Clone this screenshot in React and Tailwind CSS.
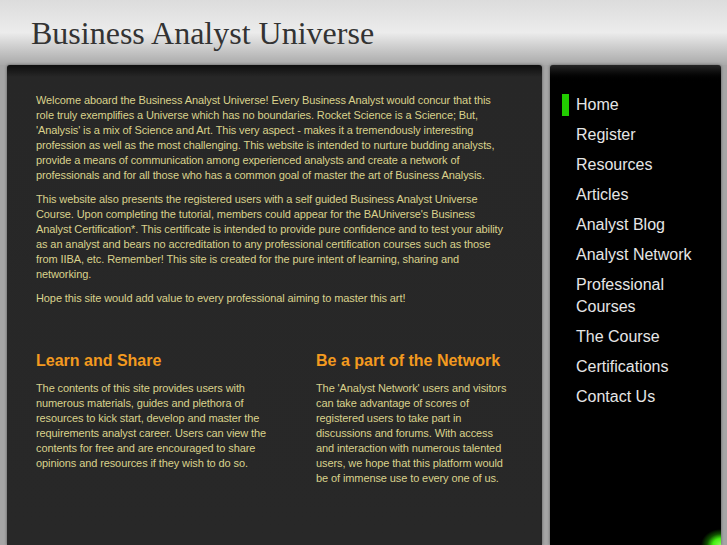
import React from 'react';

const menu = [
  'Home',
  'Register',
  'Resources',
  'Articles',
  'Analyst Blog',
  'Analyst Network',
  'Professional Courses',
  'The Course',
  'Certifications',
  'Contact Us',
];

// lines are broken where the original page breaks them
const intro = [
  [
    'Welcome aboard the Business Analyst Universe! Every Business Analyst would concur that this',
    'role truly exemplifies a Universe which has no boundaries. Rocket Science is a Science; But,',
    "'Analysis' is a mix of Science and Art. This very aspect - makes it a tremendously interesting",
    'profession as well as the most challenging. This website is intended to nurture budding analysts,',
    'provide a means of communication among experienced analysts and create a network of',
    'professionals and for all those who has a common goal of master the art of Business Analysis.',
  ],
  [
    'This website also presents the registered users with a self guided Business Analyst Universe',
    "Course. Upon completing the tutorial, members could appear for the BAUniverse's Business",
    'Analyst Certification*. This certificate is intended to provide pure confidence and to test your ability',
    'as an analyst and bears no accreditation to any professional certification courses such as those',
    'from IIBA, etc. Remember! This site is created for the pure intent of learning, sharing and',
    'networking.',
  ],
  ['Hope this site would add value to every professional aiming to master this art!'],
];

const columns = [
  {
    title: 'Learn and Share',
    lines: [
      'The contents of this site provides users with',
      'numerous materials, guides and plethora of',
      'resources to kick start, develop and master the',
      'requirements analyst career. Users can view the',
      'contents for free and are encouraged to share',
      'opinions and resources if they wish to do so.',
    ],
  },
  {
    title: 'Be a part of the Network',
    lines: [
      "The 'Analyst Network' users and visitors",
      'can take advantage of scores of',
      'registered users to take part in',
      'discussions and forums. With access',
      'and interaction with numerous talented',
      'users, we hope that this platform would',
      'be of immense use to every one of us.',
    ],
  },
];

function Lines({ lines }) {
  return (
    <p className="text-[11px] leading-[15px] text-[#dad28c] tracking-[-0.1px]">
      {lines.map((l) => (
        <span key={l} className="block whitespace-nowrap">
          {l}
        </span>
      ))}
    </p>
  );
}

function App() {
  return (
    <div className="w-full h-[545px] overflow-hidden bg-[#a5a5a5] flex flex-col">
      {/* Header */}
      <div className="h-[65px] shrink-0 bg-gradient-to-b from-[#dcdcdc] via-[#ececec] to-[#a9a9a9] pl-[31px] pt-[15px]">
        <h1
          className="text-[32px] leading-[36px] text-[#333333]"
          style={{ fontFamily: '"Liberation Serif", "Times New Roman", serif' }}
        >
          Business Analyst Universe
        </h1>
      </div>

      {/* Body */}
      <div
        className="flex flex-1 min-h-0 pl-[7px] pr-[6px] gap-[8px]"
        style={{ fontFamily: '"Liberation Sans", Arial, sans-serif' }}
      >
        {/* Main content */}
        <div className="w-[535px] shrink-0 overflow-hidden rounded-t-[3px] bg-[#282828] bg-gradient-to-b from-[#0e0e0e] via-[#272727] via-[12px] to-[#282828] shadow-[0_0_3px_#555] pl-[29px] pr-[20px] pt-[28px]">
          <div className="flex flex-col gap-[9px]">
            {intro.map((p) => (
              <Lines key={p[0]} lines={p} />
            ))}
          </div>

          <div className="grid grid-cols-[250px_200px] gap-x-[30px] mt-[45px]">
            {columns.map((c) => (
              <div key={c.title}>
                <h2 className="text-[16px] leading-[20px] font-bold text-[#f39a1f]">{c.title}</h2>
                <div className="mt-[10px]">
                  <Lines lines={c.lines} />
                </div>
              </div>
            ))}
          </div>
        </div>

        {/* Sidebar */}
        <div className="relative w-[171px] shrink-0 rounded-t-[3px] bg-black bg-gradient-to-b from-[#262626] via-black via-[18px] to-black shadow-[0_0_3px_#555] pt-[25px] pl-[12px] pr-[8px]">
          <ul className="flex flex-col">
            {menu.map((item, i) => (
              <li key={item} className="flex items-start gap-[7px] py-[4px]">
                <span className={`w-[7px] h-[22px] shrink-0 ${i === 0 ? 'bg-[#22cc00]' : 'bg-transparent'}`}></span>
                <span className="text-[16px] leading-[22px] text-[#e6e6e6]">{item}</span>
              </li>
            ))}
          </ul>
          <div className="absolute right-0 bottom-0 w-[30px] h-[24px] bg-[radial-gradient(ellipse_at_100%_100%,#88ff55_0px,#44ee11_8px,rgba(30,160,0,0.5)_14px,transparent_20px)]"></div>
        </div>
      </div>
    </div>
  );
}

export default App;
